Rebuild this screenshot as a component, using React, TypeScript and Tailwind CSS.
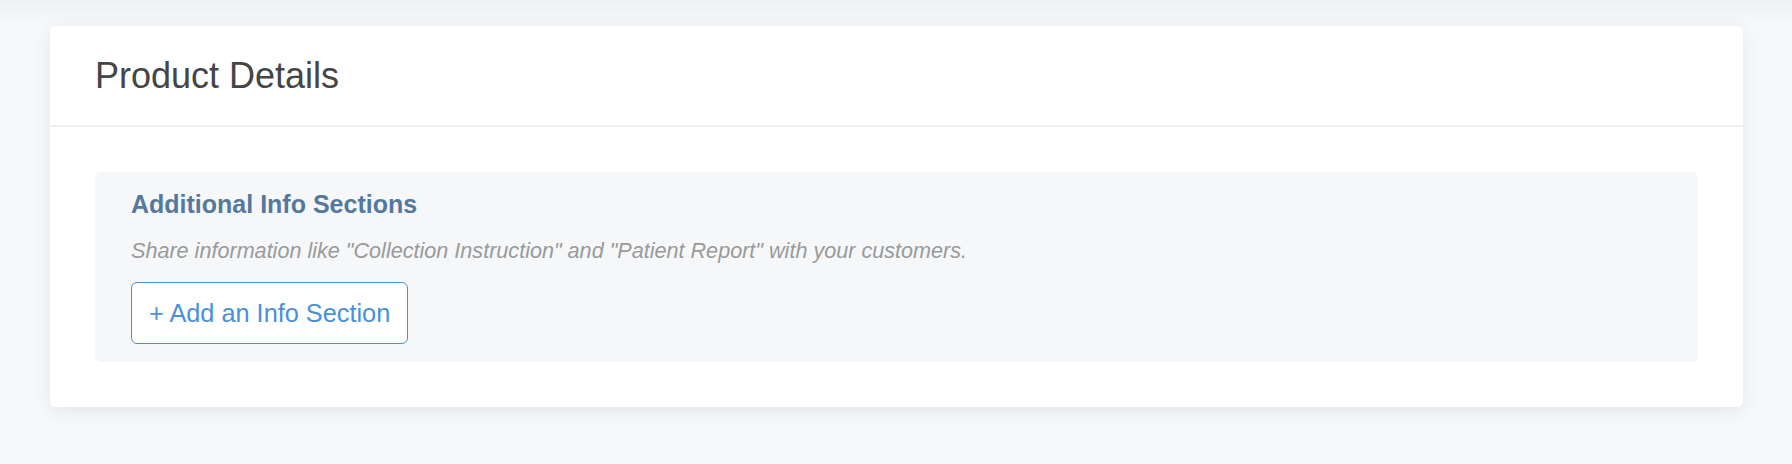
import React from "react";

// Product details card with an "additional info" panel
const InfoSectionsPanel = () => (
  <div className="rounded-[6px] bg-[#f5f7f9] px-[36px] pt-[17px] pb-[18px]">
    <h3 className="text-[25px] leading-[30px] font-bold text-[#54799d]">
      Additional Info Sections
    </h3>
    <p className="mt-[18px] text-[21.6px] leading-[28px] italic text-[#9a9a9a]">
      Share information like "Collection Instruction" and "Patient Report" with your customers.
    </p>
    <button
      type="button"
      className="mt-[17px] block h-[62px] rounded-[6px] border border-[#4a90d9] bg-white px-[17px] text-[25.3px] leading-[30px] text-[#4a90d9]"
    >
      + Add an Info Section
    </button>
  </div>
);

export default function App() {
  return (
    <div
      className="min-h-screen bg-[#f7f8fa] text-[#444]"
      style={{ fontFamily: '"Liberation Sans", Arial, sans-serif' }}
    >
      <div className="h-[26px] bg-gradient-to-b from-[#eef0f3] to-[#f7f8fa]" />

      <div className="mx-[50px] mr-[49px] rounded-[5px] bg-white shadow-[0_4px_18px_rgba(0,0,0,0.08)]">
        <div className="flex h-[101px] items-center border-b-2 border-[#eeeff1] px-[45px]">
          <h2 className="text-[36px] leading-[42px] text-[#454545]">Product Details</h2>
        </div>
        <div className="p-[45px]">
          <InfoSectionsPanel />
        </div>
      </div>
    </div>
  );
}
